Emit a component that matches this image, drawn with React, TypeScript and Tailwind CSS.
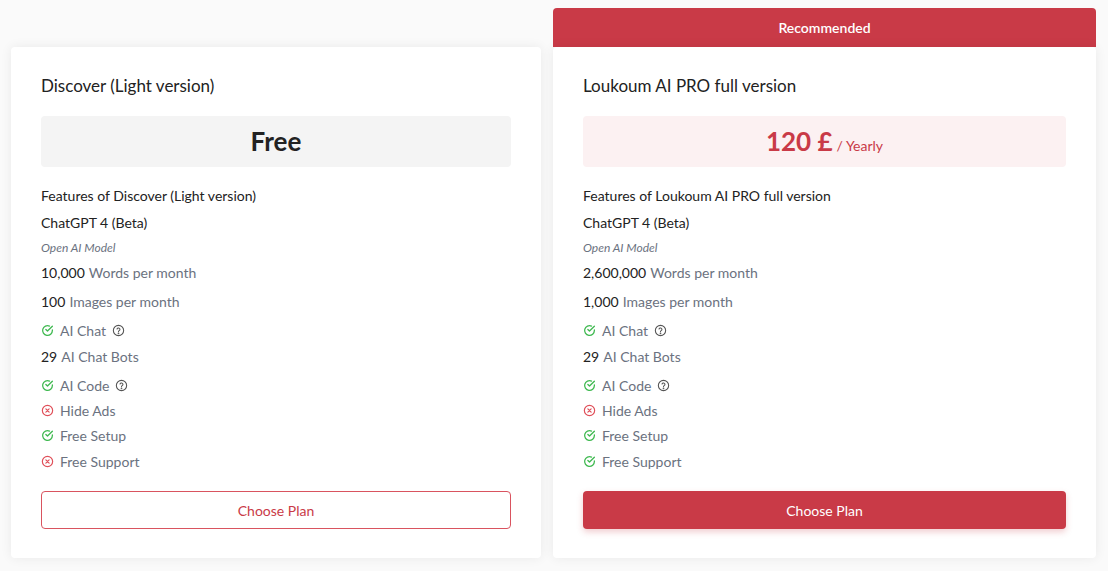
import React from "react";

const Check = () => (
  <svg width="13" height="13" viewBox="0 0 24 24" fill="none" stroke="#3fb950" strokeWidth="2.4" strokeLinecap="round" strokeLinejoin="round">
    <path d="M21 11.1V12a9 9 0 1 1-5.3-8.2" />
    <path d="M21 4 12 13l-3-3" />
  </svg>
);
const Cross = () => (
  <svg width="13" height="13" viewBox="0 0 24 24" fill="none" stroke="#e0505a" strokeWidth="2.2" strokeLinecap="round">
    <circle cx="12" cy="12" r="9.5" />
    <path d="M9 9l6 6M15 9l-6 6" />
  </svg>
);
const Help = () => (
  <svg width="13" height="13" viewBox="0 0 24 24" fill="none" stroke="#555" strokeWidth="2" strokeLinecap="round">
    <circle cx="12" cy="12" r="9.5" />
    <path d="M9.3 9.2a2.8 2.8 0 0 1 5.4 1c0 1.8-2.7 2.4-2.7 3.8" />
    <circle cx="12" cy="17.3" r="0.6" fill="#555" />
  </svg>
);

type P = { title: string; words: string; images: string; adsOk: boolean; supportOk: boolean; pro: boolean };

function Card({ title, words, images, adsOk, supportOk, pro }: P) {
  const row = "h-[25px] flex items-center text-[14px]";
  const feat = (ok: boolean, label: string, help = false) => (
    <div className={`${row} gap-[6px] text-[#6b7280]`}>
      {ok ? <Check /> : <Cross />}
      <span>{label}</span>
      {help && <Help />}
    </div>
  );
  return (
    <div className="bg-white rounded-[4px] shadow-[0_0_12px_rgba(0,0,0,0.07)] px-[30px] pt-[27px] pb-[29px] w-full">
      <div className="text-[17px] text-[#222] h-[24px] flex items-center">{title}</div>
      <div className={`mt-[18px] h-[51px] rounded-[4px] flex items-center justify-center ${pro ? "bg-[#fcf1f2]" : "bg-[#f4f4f4]"}`}>
        {pro ? (
          <span className="text-[#c93a47]">
            <span className="text-[26px] font-bold">120 £</span>
            <span className="text-[14px] ml-[4px]">/ Yearly</span>
          </span>
        ) : (
          <span className="text-[26px] font-bold text-[#222]">Free</span>
        )}
      </div>
      <div className="mt-[16px] text-[14px] text-[#222] h-[25px] flex items-center">Features of {title}</div>
      <div className="mt-[2px] text-[14px] text-[#222] h-[25px] flex items-center">ChatGPT 4 (Beta)</div>
      <div className="text-[12px] italic text-[#6b7280] h-[25px] flex items-center">Open AI Model</div>
      <div className={`${row} text-[#6b7280]`}><span className="text-[#222] mr-[4px]">{words}</span>Words per month</div>
      <div className={`${row} mt-[4px] text-[#6b7280]`}><span className="text-[#222] mr-[4px]">{images}</span>Images per month</div>
      <div className="mt-[4px]">{feat(true, "AI Chat", true)}</div>
      <div className={`${row} mt-[1px] text-[#6b7280]`}><span className="text-[#222] mr-[4px]">29</span>AI Chat Bots</div>
      <div className="mt-[4px]">{feat(true, "AI Code", true)}</div>
      {feat(adsOk, "Hide Ads")}
      {feat(true, "Free Setup")}
      <div className="mt-[1px]">{feat(supportOk, "Free Support")}</div>
      <button
        className={`mt-[17px] w-full h-[38px] rounded-[4px] text-[14px] ${
          pro ? "bg-[#c93a47] text-white shadow-[0_3px_6px_rgba(201,58,71,0.25)]" : "border border-[#d9535f] text-[#c93a47] bg-white"
        }`}
      >
        Choose Plan
      </button>
    </div>
  );
}

export default function App() {
  return (
    <div className="min-h-[571px] bg-[#fafafa] flex gap-[12px] pl-[11px] pr-[12px]" style={{ fontFamily: "Lato, 'Open Sans', sans-serif" }}>
      <div className="w-[530px] mt-[47px]">
        <Card title="Discover (Light version)" words="10,000" images="100" adsOk={false} supportOk={false} pro={false} />
      </div>
      <div className="w-[543px] mt-[8px] flex flex-col">
        <div className="h-[39px] bg-[#c93a47] rounded-t-[4px] text-white text-[14px] font-semibold flex items-center justify-center">Recommended</div>
        <Card title="Loukoum AI PRO full version" words="2,600,000" images="1,000" adsOk={false} supportOk={true} pro={true} />
      </div>
    </div>
  );
}
